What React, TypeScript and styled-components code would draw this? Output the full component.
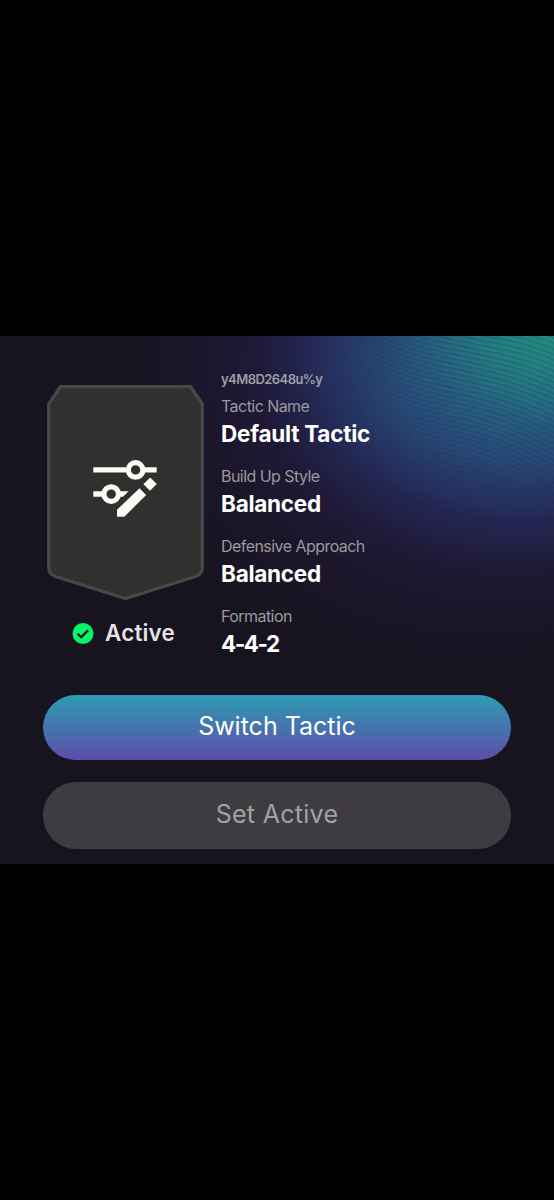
import React from "react";
import styled, { createGlobalStyle } from "styled-components";

const GlobalStyle = createGlobalStyle`
  * { box-sizing: border-box; }
  body { margin: 0; background: #000; }
`;

const Screen = styled.div`
  display: flex;
  flex-direction: column;
  justify-content: center;
  height: 1200px;
  background: #000;
  font-family: Inter, "Liberation Sans", sans-serif;
`;

const Panel = styled.main`
  position: relative;
  isolation: isolate;
  height: 528px;
  overflow: hidden;
  background:
    radial-gradient(ellipse 165px 120px at 550px -5px, rgba(34, 146, 128, 0.9) 0%, rgba(34, 138, 128, 0.65) 40%, rgba(36, 115, 130, 0.2) 78%, rgba(36, 110, 128, 0) 100%),
    radial-gradient(ellipse 235px 160px at 525px 25px, rgba(39, 104, 132, 0.9) 0%, rgba(39, 96, 132, 0.62) 45%, rgba(40, 80, 122, 0.2) 80%, rgba(40, 68, 115, 0) 100%),
    radial-gradient(ellipse 275px 215px at 525px 25px, rgba(42, 74, 122, 0.95) 0%, rgba(42, 66, 118, 0.78) 45%, rgba(40, 50, 100, 0.35) 75%, rgba(36, 36, 84, 0) 100%),
    radial-gradient(ellipse 330px 275px at 520px 10px, rgba(38, 42, 96, 0.85) 0%, rgba(36, 38, 88, 0.65) 60%, rgba(33, 28, 66, 0.3) 80%, rgba(30, 24, 60, 0) 100%),
    radial-gradient(ellipse 380px 330px at 480px 20px, rgba(40, 29, 74, 0.75) 0%, rgba(36, 27, 66, 0.5) 60%, rgba(28, 23, 48, 0) 100%),
    #17141f;
`;

const Waves = styled.svg`
  position: absolute;
  inset: 0;
  z-index: -1;
`;

const Summary = styled.section`
  display: flex;
  height: 359px;
`;

const CardColumn = styled.div`
  display: flex;
  flex-direction: column;
  align-items: center;
  width: 157px;
  margin: 49px 17px 0 47px;
`;

const Status = styled.div`
  display: flex;
  align-items: center;
  gap: 11px;
  height: 28px;
  margin: 18px 4px 0 0;
  color: #e4e2e2;
  font-size: 22.4px;
  font-weight: 600;
  line-height: 28px;
  letter-spacing: 0.2px;
`;

const Details = styled.div`
  display: flex;
  flex-direction: column;
  padding-top: 35px;
  white-space: nowrap;
`;

const Code = styled.div`
  margin-bottom: 9px;
  color: #9e9da4;
  font-size: 13px;
  font-weight: 600;
  line-height: 16px;
  letter-spacing: -0.55px;
`;

const Field = styled.div`
  display: flex;
  flex-direction: column;
  gap: 3px;
  margin-bottom: 19px;
`;

const Label = styled.div`
  color: #9a999d;
  font-size: 16px;
  line-height: 20px;
  letter-spacing: -0.55px;
`;

const Value = styled.div<{ $numeric?: boolean }>`
  color: #fff;
  font-size: 22.5px;
  font-weight: 650;
  line-height: 29px;
  margin-bottom: -1px;
  letter-spacing: ${(p) => (p.$numeric ? -1.5 : -0.25)}px;
`;

const Actions = styled.div`
  display: flex;
  flex-direction: column;
  gap: 22px;
  padding: 0 43px;
`;

const Button = styled.button<{ $primary?: boolean }>`
  height: ${(p) => (p.$primary ? 65 : 67)}px;
  padding: 0 0 3px;
  border: 0;
  border-radius: 33px;
  background: ${(p) => (p.$primary ? "linear-gradient(#2f98b2 5%, #5c4fab 96%)" : "#3e3c40")};
  color: ${(p) => (p.$primary ? "#fff" : "#a3a2a3")};
  font-family: inherit;
  font-size: 25px;
  font-weight: 400;
  line-height: 32px;
  letter-spacing: ${(p) => (p.$primary ? 0 : 0.3)}px;
`;

const fields = [
  { label: "Tactic Name", value: "Default Tactic" },
  { label: "Build Up Style", value: "Balanced" },
  { label: "Defensive Approach", value: "Balanced" },
  { label: "Formation", value: "4-4-2", numeric: true },
];

const waves = Array.from({ length: 76 }, (_, i) => {
  const left = -160 + i * 4.6;
  const middle = -90 + i * 4.8;
  const right = -80 + i * 5.6;
  return `M230 ${left - 20}C310 ${left + 15} 370 ${middle - 14} 440 ${middle}S520 ${right - 12} 570 ${right + 10}`;
});

function BackgroundWaves() {
  return (
    <Waves width="554" height="528" viewBox="0 0 554 528" fill="none" aria-hidden="true">
      <defs>
        <radialGradient id="fade" gradientUnits="userSpaceOnUse" cx="0" cy="0" r="1" gradientTransform="translate(510 50) scale(260 170)">
          <stop stopColor="#fff" />
          <stop offset=".55" stopColor="#fff" stopOpacity=".8" />
          <stop offset="1" stopColor="#fff" stopOpacity="0" />
        </radialGradient>
        <mask id="waveMask">
          <rect width="554" height="528" fill="url(#fade)" />
        </mask>
      </defs>
      <g mask="url(#waveMask)" stroke="#172c55" strokeOpacity=".2" strokeWidth="1.8">
        {waves.map((d) => (
          <path key={d} d={d} />
        ))}
      </g>
    </Waves>
  );
}

function TacticCard() {
  return (
    <svg width="157" height="216" viewBox="0 0 157 216" aria-hidden="true">
      <path
        d="M13.5 1.7H143.5L155.3 19V183C155.3 187 152.5 190 148.5 191.5L78.5 213.5L8.5 191.5C4.5 190 1.7 187 1.7 183V19Z"
        fill="#30302e"
        stroke="#484849"
        strokeWidth="3.2"
      />
      <g fill="#fbfbf8">
        <path d="M46.3 82.2H79V87.6H46.3ZM98 82.2H109.7V87.6H98ZM46.3 106.3H57V111.7H46.3ZM71 106.3H81.6L76 111.7H71Z" />
        <path d="M92.5 103.2L99.2 109.9L77.3 131.7H70V124.7Z" />
        <path d="M103.1 92.5L109.8 99.1L103 105.8L96.4 99.2Z" />
      </g>
      <g fill="none" stroke="#fbfbf8" strokeWidth="5.2">
        <circle cx="88.6" cy="84.9" r="7.3" />
        <circle cx="64.2" cy="109.1" r="7.3" />
      </g>
    </svg>
  );
}

function CheckBadge() {
  return (
    <svg width="22" height="22" viewBox="0 0 22 22" aria-hidden="true">
      <circle cx="11" cy="11.5" r="10.5" fill="#07f468" />
      <path d="M5.6 11.8L9.2 15.2L16.1 8.3" fill="none" stroke="#15131e" strokeWidth="2.2" />
    </svg>
  );
}

export default function App() {
  return (
    <>
      <GlobalStyle />
      <Screen>
        <Panel>
          <BackgroundWaves />
          <Summary>
            <CardColumn>
              <TacticCard />
              <Status>
                <CheckBadge />
                Active
              </Status>
            </CardColumn>
            <Details>
              <Code>y4M8D2648u%y</Code>
              {fields.map((field) => (
                <Field key={field.label}>
                  <Label>{field.label}</Label>
                  <Value $numeric={field.numeric}>{field.value}</Value>
                </Field>
              ))}
            </Details>
          </Summary>
          <Actions>
            <Button $primary>Switch Tactic</Button>
            <Button>Set Active</Button>
          </Actions>
        </Panel>
      </Screen>
    </>
  );
}
